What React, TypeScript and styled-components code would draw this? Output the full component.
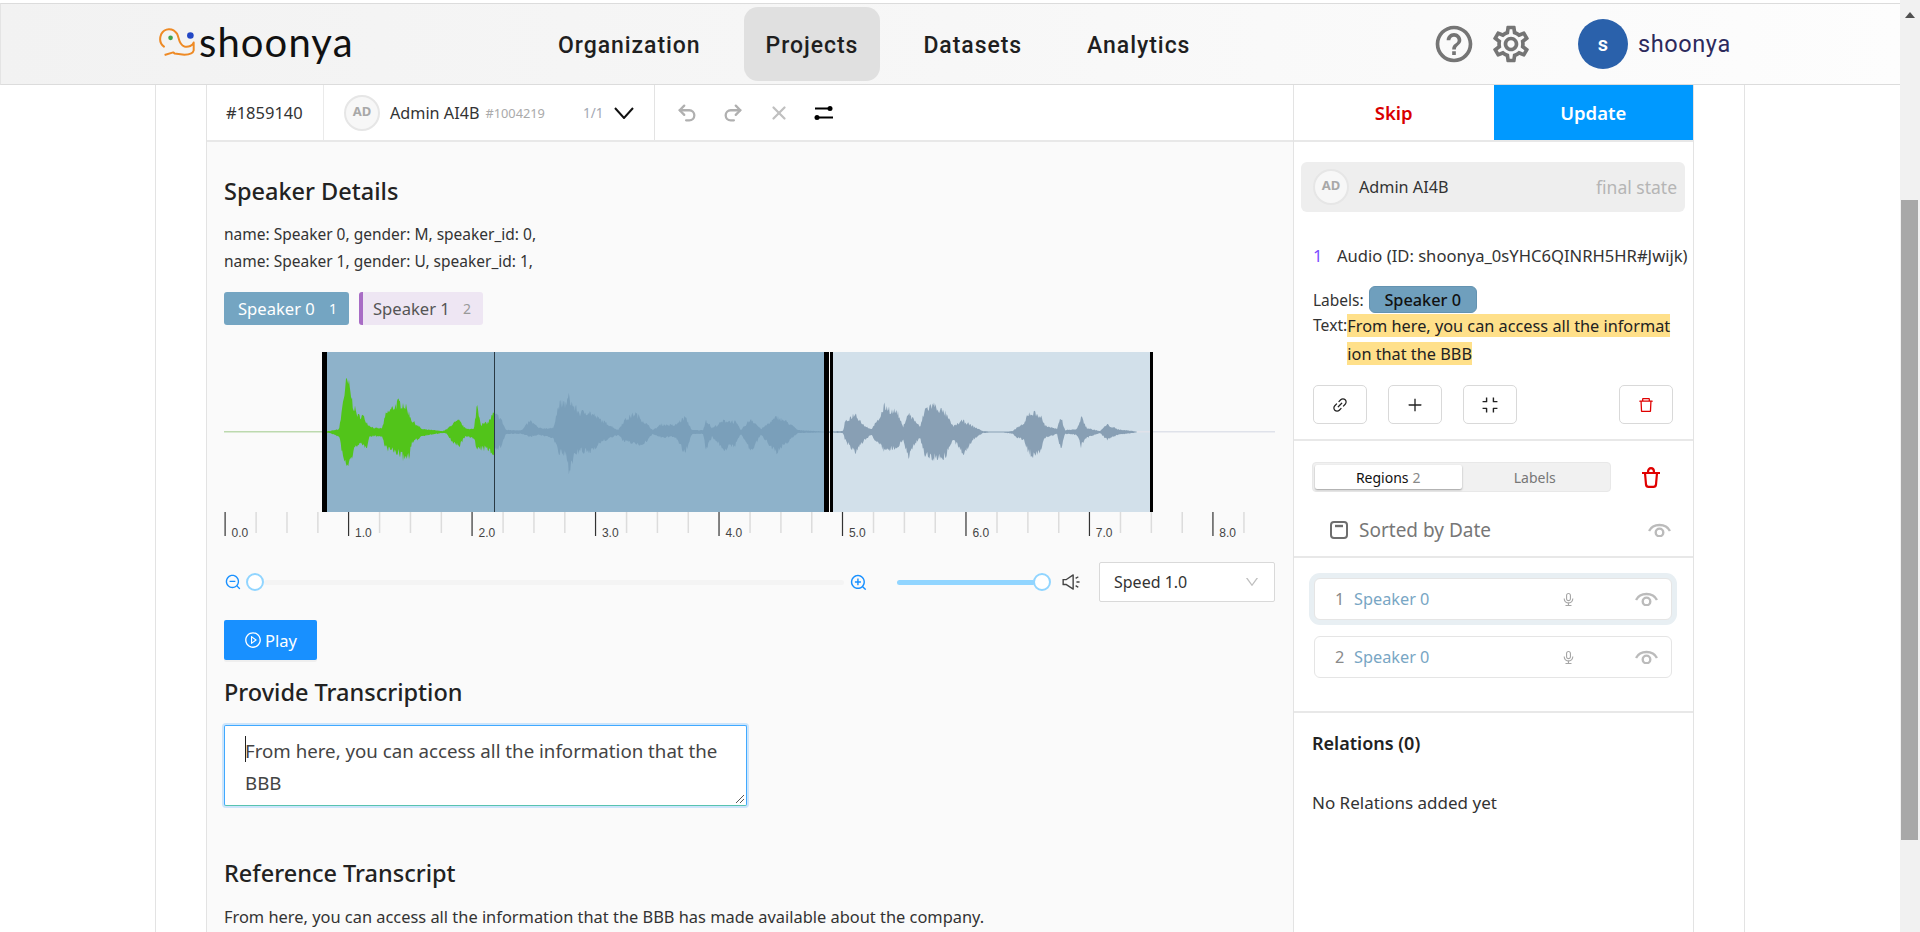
import React from "react";
import styled, { createGlobalStyle } from "styled-components";
import { Undo2, Redo2, X } from "lucide-react";
import { MdHelpOutline, MdOutlineSettings } from "react-icons/md";
import {
  AiOutlineZoomOut,
  AiOutlineZoomIn,
  AiOutlineSound,
  AiOutlineDown,
  AiOutlinePlayCircle,
  AiOutlineLink,
  AiOutlinePlus,
  AiOutlineCompress,
  AiOutlineDelete,
  AiOutlineAudio,
} from "react-icons/ai";

const GlobalStyle = createGlobalStyle`
  html, body {
    margin: 0;
    padding: 0;
    background: #fff;
    overflow: hidden;
  }
  * {
    box-sizing: border-box;
  }
  body {
    font-family: "Noto Sans", "Open Sans", sans-serif;
    color: #333;
  }
`;

const Shell = styled.div`
  display: flex;
  height: 932px;
  width: 1920px;
  overflow: hidden;
`;

const Viewport = styled.div`
  flex: 1;
  min-width: 0;
  display: flex;
  flex-direction: column;
  padding-top: 3px;
`;

const Scrollbar = styled.div`
  width: 20px;
  background: #f1f1f1;
  padding-top: 200px;
  padding-left: 1px;
  position: relative;
`;

const ScrollArrow = styled.div`
  position: absolute;
  top: 12px;
  left: 5px;
  width: 0;
  height: 0;
  border-left: 5px solid transparent;
  border-right: 5px solid transparent;
  border-bottom: 6px solid #505050;
`;

const ScrollThumb = styled.div`
  width: 17px;
  height: 640px;
  background: #a8a8a8;
`;

/* header */
const Header = styled.header`
  height: 82px;
  flex: none;
  display: flex;
  align-items: center;
  padding-left: 157px;
  border-top: 1px solid #dcdcdc;
  border-bottom: 1px solid #dcdcdc;
  border-left: 1px solid #e4e4e4;
  background: linear-gradient(90deg, #f2f2f2 0%, #f7f7f7 50%, #fdfdfd 100%);
`;

const Logo = styled.div`
  display: flex;
  align-items: center;
  width: 378px;
`;

const LogoMarkSvg = styled.svg`
  margin-top: -5px;
  flex: none;
`;

const LogoText = styled.span`
  font-family: "Lato", sans-serif;
  font-size: 40px;
  line-height: 44px;
  color: #111;
  margin: -5px 0 0 3px;
  letter-spacing: 1.1px;
`;

const Nav = styled.nav`
  display: flex;
  align-items: center;
  gap: 21px;
  width: 896px;
`;

const NavItem = styled.div<{ $active?: boolean }>`
  height: 74px;
  padding: 2px 22px 0;
  display: flex;
  align-items: center;
  border-radius: 14px;
  font-family: Roboto, sans-serif;
  font-weight: 500;
  font-size: 23px;
  letter-spacing: 0.95px;
  color: #1f1f1f;
  background: ${(p) => (p.$active ? "#e0e0e0" : "transparent")};
`;

const HeaderIcons = styled.div`
  display: flex;
  align-items: center;
  gap: 13px;
  color: #757575;
  font-size: 44px;
  width: 146px;
  svg {
    display: block;
  }
`;

const UserAvatar = styled.div`
  width: 50px;
  height: 50px;
  border-radius: 50%;
  background: #2a61ab;
  color: #fff;
  font-family: Roboto, sans-serif;
  font-weight: 600;
  font-size: 20px;
  display: flex;
  align-items: center;
  justify-content: center;
`;

const UserName = styled.span`
  font-family: Roboto, sans-serif;
  font-size: 23.5px;
  letter-spacing: 0.6px;
  color: #2c2a5c;
  margin-left: 10px;
`;

/* page frame */
const Outer = styled.div`
  flex: 1;
  min-height: 0;
  margin-left: 155px;
  width: 1590px;
  border-left: 1px solid #e3e3e3;
  border-right: 1px solid #e3e3e3;
  padding-left: 50px;
`;

const Studio = styled.div`
  width: 1488px;
  height: 100%;
  display: flex;
  border-left: 1px solid #e3e3e3;
`;

const MainColumn = styled.main`
  width: 1086px;
  flex: none;
  background: #fafafa;
`;

const SideColumn = styled.aside`
  flex: 1;
  border-left: 1px solid #e3e3e3;
  border-right: 1px solid #e3e3e3;
  background: #fff;
`;

const TopBar = styled.div`
  height: 57px;
  display: flex;
  align-items: stretch;
  background: #fff;
  border-bottom: 2px solid #e8e8e8;
`;

const TaskId = styled.div`
  width: 117px;
  padding-left: 19px;
  display: flex;
  align-items: center;
  font-size: 16.5px;
  color: #333;
  border-right: 1px solid #eaeaea;
`;

const AnnotationPicker = styled.div`
  width: 331px;
  padding-left: 20px;
  display: flex;
  align-items: center;
  white-space: nowrap;
  border-right: 1px solid #e3e3e3;
`;

const Avatar = styled.div`
  width: 36px;
  height: 36px;
  flex: none;
  border-radius: 50%;
  border: 2px solid #e6e6e6;
  background: #f7f7f7;
  color: #a8a8a8;
  font-size: 13px;
  font-weight: 700;
  display: flex;
  align-items: center;
  justify-content: center;
  padding-bottom: 4px;
`;

const AdminName = styled.span`
  margin-left: 10px;
  font-size: 16.2px;
  color: #333;
`;

const AdminId = styled.span`
  margin-left: 6px;
  font-size: 12.8px;
  color: #aaa;
`;

const Pager = styled.span`
  margin-left: 38px;
  font-size: 13.5px;
  color: #a3a8b3;
`;

const PickerChevron = styled.svg`
  margin-left: 11px;
  flex: none;
`;

const HistoryTools = styled.div`
  display: flex;
  align-items: center;
  gap: 24px;
  padding-left: 21px;
`;

const HistoryIcon = styled.span<{ $tone: string }>`
  display: flex;
  color: ${(p) => p.$tone};
`;

const Content = styled.div`
  padding: 34px 15px 0 17px;
`;

const Heading = styled.h2<{ $top?: number }>`
  margin: ${(p) => p.$top ?? 0}px 0 0;
  font-size: 23.5px;
  line-height: 30px;
  font-weight: 500;
  color: #222;
`;

const Details = styled.div`
  margin-top: 15px;
  font-size: 15.5px;
  line-height: 27px;
  color: #333;
`;

const Chips = styled.div`
  margin-top: 17px;
  display: flex;
  gap: 10px;
`;

const SpeakerChip = styled.div<{ $selected?: boolean }>`
  height: 33px;
  width: ${(p) => (p.$selected ? 125 : 124)}px;
  display: flex;
  align-items: center;
  justify-content: space-between;
  padding: 0 12px 0 ${(p) => (p.$selected ? 14 : 10)}px;
  border-radius: 3px;
  font-size: 16.6px;
  background: ${(p) => (p.$selected ? "#74a5c2" : "#eee6f3")};
  color: ${(p) => (p.$selected ? "#fff" : "#555")};
  border-left: ${(p) => (p.$selected ? "0" : "4px solid #a86cc5")};
`;

const ChipKey = styled.span<{ $selected?: boolean }>`
  font-size: 14px;
  color: ${(p) => (p.$selected ? "#fff" : "#999")};
`;

const WaveBox = styled.div`
  margin-top: 27px;
  height: 190px;
  svg {
    display: block;
  }
`;

const Controls = styled.div`
  margin-top: 20px;
  height: 40px;
  display: flex;
  align-items: center;
  color: #1890ff;
`;

const ZoomSlider = styled.div`
  width: 598px;
  margin: 0 5px 0 4px;
  display: flex;
  align-items: center;
`;

const Knob = styled.div`
  width: 18px;
  height: 18px;
  flex: none;
  border-radius: 50%;
  background: #fff;
  border: 2px solid #91d5ff;
`;

const Rail = styled.div`
  flex: 1;
  height: 5px;
  background: #f4f4f4;
  border-radius: 3px;
`;

const VolumeSlider = styled.div`
  width: 154px;
  margin-left: 29px;
  display: flex;
  align-items: center;
`;

const VolumeFill = styled.div`
  flex: 1;
  height: 5px;
  margin-right: -2px;
  background: #91d5ff;
  border-radius: 3px;
`;

const SoundIcon = styled(AiOutlineSound)`
  margin-left: 10px;
  color: #444;
`;

const SpeedSelect = styled.div`
  width: 176px;
  height: 40px;
  margin-left: 18px;
  padding: 0 14px;
  display: flex;
  align-items: center;
  justify-content: space-between;
  background: #fff;
  border: 1px solid #d9d9d9;
  border-radius: 2px;
  font-size: 16px;
  color: #333;
  svg {
    color: #bfbfbf;
  }
`;

const PlayButton = styled.button`
  margin-top: 18px;
  width: 93px;
  height: 40px;
  display: flex;
  align-items: center;
  justify-content: center;
  gap: 3px;
  border: 0;
  border-radius: 2px;
  background: #1890ff;
  color: #fff;
  font-family: inherit;
  font-size: 16.5px;
  box-shadow: 0 2px 0 rgba(0, 0, 0, 0.045);
`;

const TranscriptBox = styled.div`
  margin-top: 18px;
  width: 523px;
  height: 81px;
  padding: 9px 20px;
  position: relative;
  background: #fff;
  border: 1px solid #40a9ff;
  border-bottom-color: #58c3b0;
  border-radius: 2px;
  box-shadow: 0 0 0 2px rgba(24, 144, 255, 0.2);
  font-size: 18.7px;
  line-height: 32px;
  color: #444;
`;

const Caret = styled.span`
  position: absolute;
  left: 20px;
  top: 10px;
  width: 1px;
  height: 26px;
  background: #222;
`;

const ResizeGrip = styled.svg`
  position: absolute;
  right: 1px;
  bottom: 1px;
`;

const Paragraph = styled.p`
  margin: 17px 0 0;
  font-size: 16.4px;
  line-height: 24px;
  color: #333;
`;

/* right side */
const SideActions = styled.div`
  height: 57px;
  display: flex;
  border-bottom: 2px solid #e8e8e8;
`;

const ActionButton = styled.div<{ $primary?: boolean }>`
  flex: 1;
  display: flex;
  align-items: center;
  justify-content: center;
  font-size: 18.5px;
  font-weight: 600;
  color: ${(p) => (p.$primary ? "#fff" : "#d90000")};
  background: ${(p) => (p.$primary ? "#0099ff" : "#fff")};
`;

const AdminCard = styled.div`
  margin: 20px 8px 0 7px;
  height: 50px;
  padding: 0 8px 0 12px;
  display: flex;
  align-items: center;
  background: #eee;
  border-radius: 6px;
`;

const FinalState = styled.span`
  margin-left: auto;
  font-size: 17.5px;
  color: #b5b5b5;
`;

const ResultBlock = styled.section`
  padding: 32px 0 15px 19px;
  border-bottom: 2px solid #e8e8e8;
`;

const ResultTitle = styled.div`
  display: flex;
  font-size: 16.6px;
  line-height: 24px;
  white-space: nowrap;
  color: #333;
`;

const ResultIndex = styled.span`
  width: 24px;
  color: #7a4dff;
`;

const LabelLine = styled.div`
  margin-top: 18px;
  display: flex;
  align-items: center;
  font-size: 15.5px;
  height: 27px;
`;

const LabelTag = styled.span`
  margin-left: 5px;
  width: 108px;
  height: 27px;
  display: flex;
  align-items: center;
  justify-content: center;
  border-radius: 6px;
  background: #6f9fbd;
  border: 1px solid #6493b1;
  color: #111;
  font-size: 16.3px;
  font-weight: 500;
`;

const TextLine = styled.div`
  margin-top: -2px;
  display: flex;
  font-size: 15.7px;
  line-height: 28px;
  white-space: nowrap;
`;

const Highlight = styled.span`
  background: #ffe08a;
  padding: 0.5px 0;
  font-size: 16.3px;
  color: #222;
  -webkit-box-decoration-break: clone;
  box-decoration-break: clone;
`;

const ToolRow = styled.div`
  margin-top: 18px;
  padding-right: 20px;
  display: flex;
  gap: 21px;
`;

const ToolButton = styled.div<{ $push?: boolean }>`
  width: 54px;
  height: 39px;
  display: flex;
  align-items: center;
  justify-content: center;
  border: 1px solid #d9d9d9;
  border-radius: 5px;
  color: #222;
  font-size: 18px;
  margin-left: ${(p) => (p.$push ? "auto" : "0")};
`;

const RegionsHead = styled.section`
  padding: 21px 33px 0 18px;
  height: 117px;
  border-bottom: 2px solid #e8e8e8;
`;

const TabRow = styled.div`
  display: flex;
  align-items: center;
  justify-content: space-between;
`;

const Tabs = styled.div`
  width: 299px;
  height: 30px;
  padding: 2px;
  display: flex;
  background: #f1f1f1;
  border: 1px solid #e8e8e8;
  border-radius: 4px;
`;

const Tab = styled.div<{ $active?: boolean }>`
  width: 148px;
  display: flex;
  align-items: center;
  justify-content: center;
  font-size: 14px;
  border-radius: 2px;
  color: ${(p) => (p.$active ? "#111" : "#777")};
  background: ${(p) => (p.$active ? "#fff" : "transparent")};
  box-shadow: ${(p) => (p.$active ? "0 1px 2px rgba(0,0,0,.35)" : "none")};
`;

const TabCount = styled.span`
  margin-left: 4px;
  color: #888;
`;

const SortRow = styled.div`
  margin-top: 25px;
  margin-right: -11px;
  padding-left: 18px;
  display: flex;
  align-items: center;
  font-size: 19px;
  line-height: 26px;
  color: #777;
`;

const SortLabel = styled.span`
  margin-left: 11px;
`;

const EyeSlot = styled.span`
  margin-left: auto;
  display: flex;
`;

const RegionList = styled.section`
  height: 155px;
  padding: 20px 21px 0 20px;
  display: flex;
  flex-direction: column;
  gap: 16px;
  border-bottom: 2px solid #e8e8e8;
`;

const RegionRow = styled.div<{ $selected?: boolean }>`
  height: 42px;
  padding: 0 13px 0 20px;
  display: flex;
  align-items: center;
  background: #fff;
  border: 1px solid #e5e5e5;
  border-radius: 6px;
  font-size: 16.3px;
  box-shadow: ${(p) => (p.$selected ? "0 0 0 5px #e8eff3" : "none")};
`;

const RegionIndex = styled.span`
  width: 19px;
  color: #8a8a8a;
`;

const RegionName = styled.span`
  width: 207px;
  color: #78a6c4;
`;

const MicIcon = styled(AiOutlineAudio)`
  color: #a6a6a6;
`;

const Relations = styled.section`
  padding: 18px 18px;
`;

const RelationsTitle = styled.div`
  font-size: 18px;
  line-height: 24px;
  font-weight: 600;
  color: #222;
`;

const RelationsEmpty = styled.div`
  margin-top: 36px;
  font-size: 17px;
  line-height: 24px;
  color: #333;
`;

/* drawings */
const envelope: number[][] = [
  [322, 0.5, 0.5], [330, 1, 1], [339, 3, 5], [341, 15, 14], [343, 34, 28], [346, 50, 35], [348, 53, 35],
  [350, 44, 32], [353, 29, 22], [358, 17, 12], [363, 17, 15], [367, 10, 15], [369, 7, 5], [375, 4, 4],
  [382, 4, 5], [386, 19, 17], [392, 25, 20], [398, 31, 22], [404, 30, 28], [409, 20, 25], [412, 12, 12],
  [422, 3, 4], [443, 1, 1], [447, 3, 2], [453, 9, 12], [459, 12, 15], [465, 4, 5], [474, 3, 6], [477, 30, 20],
  [481, 8, 18], [488, 10, 18], [493, 19, 22], [497, 17, 18], [500, 16, 17], [506, 2, 2], [522, 2, 2],
  [530, 12, 5], [539, 4, 3], [553, 4, 6], [559, 29, 22], [566, 30, 25], [569, 37, 40], [573, 28, 28],
  [580, 20, 20], [588, 22, 22], [602, 12, 10], [618, 2, 3], [624, 12, 10], [635, 20, 12], [643, 12, 14],
  [653, 2, 2], [661, 8, 6], [675, 7, 5], [685, 16, 23], [692, 2, 2], [703, 2, 2], [706, 13, 18], [712, 4, 5],
  [724, 12, 18], [735, 11, 14], [741, 2, 2], [751, 14, 20], [761, 3, 3], [777, 16, 22], [788, 10, 10],
  [798, 2, 1], [824, 0.5, 0.5], [843, 1, 1], [845, 10, 8], [855, 20, 23], [863, 8, 10], [871, 3, 3],
  [878, 12, 12], [885, 28, 20], [892, 22, 18], [897, 22, 16], [903, 5, 8], [908, 20, 27], [915, 12, 12],
  [920, 5, 6], [925, 24, 24], [933, 29, 27], [945, 20, 26], [953, 6, 8], [963, 12, 23], [973, 6, 8],
  [983, 1, 1], [1000, 0, 0], [1013, 1, 2], [1017, 5, 6], [1024, 8, 8], [1028, 20, 20], [1034, 20, 27],
  [1040, 18, 20], [1045, 7, 6], [1057, 3, 2], [1061, 16, 20], [1065, 2, 2], [1077, 3, 3], [1081, 16, 15],
  [1087, 4, 6], [1100, 1, 1], [1107, 8, 8], [1117, 3, 3], [1137, 0.5, 0.5],
];

const CENTER = 432;

function buildWave() {
  let seed = 7;
  const rnd = () => {
    seed = (seed * 16807) % 2147483647;
    return seed / 2147483647;
  };
  const top: string[] = [];
  const bottom: string[] = [];
  let i = 0;
  for (let x = 322; x <= 1137; x += 0.75) {
    while (i < envelope.length - 2 && envelope[i + 1][0] < x) i++;
    const [x0, u0, d0] = envelope[i];
    const [x1, u1, d1] = envelope[i + 1];
    const t = (x - x0) / (x1 - x0);
    const up = u0 + (u1 - u0) * t;
    const down = d0 + (d1 - d0) * t;
    top.push(`${x},${(CENTER - Math.max(up * (0.75 + 0.35 * rnd()), 0.5)).toFixed(1)}`);
    bottom.unshift(`${x},${(CENTER + Math.max(down * (0.75 + 0.35 * rnd()), 0.5)).toFixed(1)}`);
  }
  return [...top, ...bottom].join(" ");
}

const wavePoints = buildWave();

const Waveform = () => {
  const ticks = Array.from({ length: 34 }, (_, n) => n);
  return (
    <svg width={1051} height={190} viewBox="224 352 1051 190">
      <defs>
        <clipPath id="played"><rect x={322} y={352} width={172} height={160} /></clipPath>
        <clipPath id="first"><rect x={494} y={352} width={336} height={160} /></clipPath>
        <clipPath id="second"><rect x={830} y={352} width={320} height={160} /></clipPath>
      </defs>
      <rect x={322} y={352} width={505} height={160} fill="#8eb2ca" />
      <rect x={830} y={352} width={323} height={160} fill="#d2e0ea" />
      <rect x={224} y={431} width={98} height={1.5} fill="#bcd9ae" />
      <rect x={1137} y={431} width={138} height={1.5} fill="#dfe2ea" />
      <polygon points={wavePoints} fill="#52c41a" clipPath="url(#played)" />
      <polygon points={wavePoints} fill="#7a9fba" clipPath="url(#first)" />
      <polygon points={wavePoints} fill="#889fb4" clipPath="url(#second)" />
      <rect x={322} y={352} width={5} height={160} fill="#000" />
      <rect x={824} y={352} width={5} height={160} fill="#000" />
      <rect x={830} y={352} width={3} height={160} fill="#000" />
      <rect x={1150} y={352} width={3} height={160} fill="#000" />
      <rect x={494} y={352} width={1} height={160} fill="#2a3a44" />
      {ticks.map((n) => {
        const x = 224.5 + n * 30.87;
        const major = n % 4 === 0;
        return major ? (
          <g key={n}>
            <rect x={x} y={512} width={1.2} height={24} fill="#333" />
            <text x={x + 7} y={536.5} fontFamily="Liberation Sans, sans-serif" fontSize={12} fill="#444">
              {(n / 4).toFixed(1)}
            </text>
          </g>
        ) : (
          <rect key={n} x={x} y={512} width={1.5} height={21} fill="#dcdcdc" />
        );
      })}
    </svg>
  );
};

const LogoMark = () => (
  <LogoMarkSvg width={38} height={32} viewBox="50 45 115 95">
    <path
      d="M70 108 C58 100 52 88 60 68 C70 50 95 48 108 68 C114 78 112 100 130 106 C142 108 156 104 158 94 L158 118 C156 128 146 131 130 131 L100 127 L96 124 L70 132"
      fill="none"
      stroke="#ee8a25"
      strokeWidth={6}
      strokeLinejoin="round"
    />
    <circle cx={88} cy={80} r={7} fill="#3fa34d" />
    <circle cx={148} cy={73} r={10} fill="#2347c5" />
  </LogoMarkSvg>
);

const SwapIcon = () => (
  <svg width={20} height={20} viewBox="0 0 20 20" fill="none" stroke="#000" strokeWidth={2}>
    <path d="M1 5.500h15M4 14.500h15" />
    <circle cx={16} cy={5.5} r={2.5} fill="#000" stroke="none" />
    <circle cx={3} cy={14.5} r={2.5} fill="#000" stroke="none" />
  </svg>
);

const EyeIcon = ({ size = 23 }: { size?: number }) => (
  <svg width={size} height={size * 0.65} viewBox="0 0 23 15" fill="none" stroke="#bbb" strokeWidth={2.4}>
    <path d="M1 8C5 0 18 0 22 8" />
    <circle cx={11.5} cy={9.5} r={3.8} />
  </svg>
);

const BinIcon = () => (
  <svg width={18} height={21} viewBox="0 0 18 21" fill="none" stroke="#e00000" strokeWidth={2.2}>
    <path d="M0 6h18M3 6l1 11.500c.2 1.600 1 2.300 2.500 2.300h5c1.500 0 2.300-.7 2.500-2.300L15 6M6 5c0-2.500 1.200-3.800 3-3.800s3 1.300 3 3.800" />
  </svg>
);

const SortIcon = () => (
  <svg width={18} height={18} viewBox="0 0 18 18" fill="none" stroke="#6e6e6e" strokeWidth={2}>
    <rect x={1} y={1} width={16} height={16} rx={3} />
    <path d="M5 5h8" strokeWidth={2.4} />
  </svg>
);

const App = () => (
  <>
    <GlobalStyle />
    <Shell>
      <Viewport>
        <Header>
          <Logo>
            <LogoMark />
            <LogoText>shoonya</LogoText>
          </Logo>
          <Nav>
            <NavItem>Organization</NavItem>
            <NavItem $active>Projects</NavItem>
            <NavItem>Datasets</NavItem>
            <NavItem>Analytics</NavItem>
          </Nav>
          <HeaderIcons>
            <MdHelpOutline />
            <MdOutlineSettings />
          </HeaderIcons>
          <UserAvatar>s</UserAvatar>
          <UserName>shoonya</UserName>
        </Header>
        <Outer>
          <Studio>
            <MainColumn>
              <TopBar>
                <TaskId>#1859140</TaskId>
                <AnnotationPicker>
                  <Avatar>AD</Avatar>
                  <AdminName>Admin AI4B</AdminName>
                  <AdminId>#1004219</AdminId>
                  <Pager>1/1</Pager>
                  <PickerChevron width={20} height={12} viewBox="0 0 20 12" fill="none" stroke="#111" strokeWidth={2}>
                    <path d="M1 1l9 10 9-10" />
                  </PickerChevron>
                </AnnotationPicker>
                <HistoryTools>
                  <HistoryIcon $tone="#b0b0b0"><Undo2 size={22} strokeWidth={2.5} /></HistoryIcon>
                  <HistoryIcon $tone="#b0b0b0"><Redo2 size={22} strokeWidth={2.5} /></HistoryIcon>
                  <HistoryIcon $tone="#c0c0c0"><X size={22} strokeWidth={2.5} /></HistoryIcon>
                  <HistoryIcon $tone="#000"><SwapIcon /></HistoryIcon>
                </HistoryTools>
              </TopBar>
              <Content>
                <Heading>Speaker Details</Heading>
                <Details>
                  name: Speaker 0, gender: M, speaker_id: 0,
                  <br />
                  name: Speaker 1, gender: U, speaker_id: 1,
                </Details>
                <Chips>
                  <SpeakerChip $selected>
                    Speaker 0 <ChipKey $selected>1</ChipKey>
                  </SpeakerChip>
                  <SpeakerChip>
                    Speaker 1 <ChipKey>2</ChipKey>
                  </SpeakerChip>
                </Chips>
                <WaveBox>
                  <Waveform />
                </WaveBox>
                <Controls>
                  <AiOutlineZoomOut size={18} />
                  <ZoomSlider>
                    <Knob />
                    <Rail />
                  </ZoomSlider>
                  <AiOutlineZoomIn size={19} />
                  <VolumeSlider>
                    <VolumeFill />
                    <Knob />
                  </VolumeSlider>
                  <SoundIcon size={20} />
                  <SpeedSelect>
                    Speed 1.0
                    <AiOutlineDown size={16} />
                  </SpeedSelect>
                </Controls>
                <PlayButton>
                  <AiOutlinePlayCircle size={18} />
                  Play
                </PlayButton>
                <Heading $top={17}>Provide Transcription</Heading>
                <TranscriptBox>
                  <Caret />
                  From here, you can access all the information that the BBB
                  <ResizeGrip width={10} height={10} viewBox="0 0 10 10" stroke="#555" strokeWidth={1}>
                    <path d="M1 9L9 1M5 9L9 5" />
                  </ResizeGrip>
                </TranscriptBox>
                <Heading $top={52}>Reference Transcript</Heading>
                <Paragraph>
                  From here, you can access all the information that the BBB has made available about the company.
                </Paragraph>
              </Content>
            </MainColumn>
            <SideColumn>
              <SideActions>
                <ActionButton>Skip</ActionButton>
                <ActionButton $primary>Update</ActionButton>
              </SideActions>
              <AdminCard>
                <Avatar>AD</Avatar>
                <AdminName>Admin AI4B</AdminName>
                <FinalState>final state</FinalState>
              </AdminCard>
              <ResultBlock>
                <ResultTitle>
                  <ResultIndex>1</ResultIndex>
                  Audio (ID: shoonya_0sYHC6QINRH5HR#Jwijk)
                </ResultTitle>
                <LabelLine>
                  Labels:
                  <LabelTag>Speaker 0</LabelTag>
                </LabelLine>
                <TextLine>
                  Text:
                  <div>
                    <Highlight>
                      From here, you can access all the informat
                      <br />
                      ion that the BBB
                    </Highlight>
                  </div>
                </TextLine>
                <ToolRow>
                  <ToolButton><AiOutlineLink /></ToolButton>
                  <ToolButton><AiOutlinePlus /></ToolButton>
                  <ToolButton><AiOutlineCompress /></ToolButton>
                  <ToolButton $push><AiOutlineDelete color="#e00000" /></ToolButton>
                </ToolRow>
              </ResultBlock>
              <RegionsHead>
                <TabRow>
                  <Tabs>
                    <Tab $active>
                      Regions<TabCount>2</TabCount>
                    </Tab>
                    <Tab>Labels</Tab>
                  </Tabs>
                  <BinIcon />
                </TabRow>
                <SortRow>
                  <SortIcon />
                  <SortLabel>Sorted by Date</SortLabel>
                  <EyeSlot><EyeIcon /></EyeSlot>
                </SortRow>
              </RegionsHead>
              <RegionList>
                <RegionRow $selected>
                  <RegionIndex>1</RegionIndex>
                  <RegionName>Speaker 0</RegionName>
                  <MicIcon size={15} />
                  <EyeSlot><EyeIcon /></EyeSlot>
                </RegionRow>
                <RegionRow>
                  <RegionIndex>2</RegionIndex>
                  <RegionName>Speaker 0</RegionName>
                  <MicIcon size={15} />
                  <EyeSlot><EyeIcon /></EyeSlot>
                </RegionRow>
              </RegionList>
              <Relations>
                <RelationsTitle>Relations (0)</RelationsTitle>
                <RelationsEmpty>No Relations added yet</RelationsEmpty>
              </Relations>
            </SideColumn>
          </Studio>
        </Outer>
      </Viewport>
      <Scrollbar>
        <ScrollArrow />
        <ScrollThumb />
      </Scrollbar>
    </Shell>
  </>
);

export default App;
